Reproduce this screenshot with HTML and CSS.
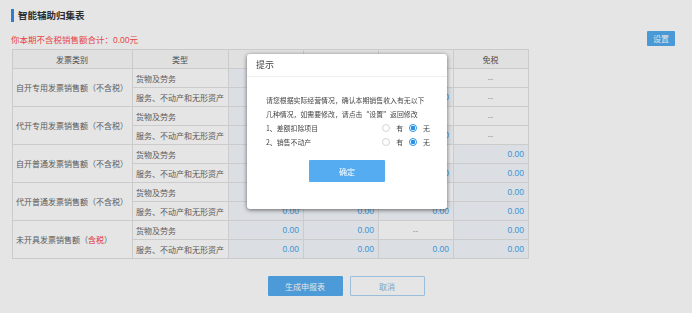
FILE: index.html
```html
<!DOCTYPE html>
<html lang="zh-CN">
<head>
    <meta charset="UTF-8">
    <title>智能辅助归集表</title>
    <link rel="stylesheet" href="styles.css">
</head>
<body>
    <div class="page">
        <h1 class="titulo">智能辅助归集表</h1>

        <div class="resumen">
            <span class="total">你本期不含税销售额合计：0.00元</span>
            <button class="boton-set">设置</button>
        </div>

        <table class="tabla">
            <thead>
                <tr>
                    <th class="c-cat">发票类别</th>
                    <th class="c-tipo">类型</th>
                    <th class="c-num">13%税率</th>
                    <th class="c-num">9%税率</th>
                    <th class="c-num">6%税率</th>
                    <th class="c-num">免税</th>
                </tr>
            </thead>
            <tbody>
                <tr>
                    <td class="cat" rowspan="2">自开专用发票销售额（不含税）</td>
                    <td class="tipo">货物及劳务</td>
                    <td class="val">0.00</td><td class="val">0.00</td><td class="nada">--</td><td class="nada">--</td>
                </tr>
                <tr>
                    <td class="tipo">服务、不动产和无形资产</td>
                    <td class="val">0.00</td><td class="val">0.00</td><td class="val">0.00</td><td class="nada">--</td>
                </tr>
                <tr>
                    <td class="cat" rowspan="2">代开专用发票销售额（不含税）</td>
                    <td class="tipo">货物及劳务</td>
                    <td class="val">0.00</td><td class="val">0.00</td><td class="nada">--</td><td class="nada">--</td>
                </tr>
                <tr>
                    <td class="tipo">服务、不动产和无形资产</td>
                    <td class="val">0.00</td><td class="val">0.00</td><td class="val">0.00</td><td class="nada">--</td>
                </tr>
                <tr>
                    <td class="cat" rowspan="2">自开普通发票销售额（不含税）</td>
                    <td class="tipo">货物及劳务</td>
                    <td class="val">0.00</td><td class="val">0.00</td><td class="nada">--</td><td class="val">0.00</td>
                </tr>
                <tr>
                    <td class="tipo">服务、不动产和无形资产</td>
                    <td class="val">0.00</td><td class="val">0.00</td><td class="val">0.00</td><td class="val">0.00</td>
                </tr>
                <tr>
                    <td class="cat" rowspan="2">代开普通发票销售额（不含税）</td>
                    <td class="tipo">货物及劳务</td>
                    <td class="val">0.00</td><td class="val">0.00</td><td class="nada">--</td><td class="val">0.00</td>
                </tr>
                <tr>
                    <td class="tipo">服务、不动产和无形资产</td>
                    <td class="val">0.00</td><td class="val">0.00</td><td class="val">0.00</td><td class="val">0.00</td>
                </tr>
                <tr>
                    <td class="cat" rowspan="2">未开具发票销售额（<span class="rojo">含税</span>）</td>
                    <td class="tipo">货物及劳务</td>
                    <td class="val">0.00</td><td class="val">0.00</td><td class="nada">--</td><td class="val">0.00</td>
                </tr>
                <tr>
                    <td class="tipo">服务、不动产和无形资产</td>
                    <td class="val">0.00</td><td class="val">0.00</td><td class="val">0.00</td><td class="val">0.00</td>
                </tr>
            </tbody>
        </table>

        <div class="acciones">
            <button class="boton boton-azul">生成申报表</button>
            <button class="boton boton-blanco">取消</button>
        </div>
    </div>

    <div class="mascara"></div>

    <div class="dialogo">
        <div class="dialogo-titulo">提示</div>
        <div class="dialogo-cuerpo">
            <p class="aviso">请您根据实际经营情况，确认本期销售收入有无以下几种情况，如需要修改，请点击“设置”返回修改</p>
            <div class="opcion">
                <span class="opcion-texto">1、差额扣除项目</span>
                <span class="radio"></span><span class="radio-label">有</span>
                <span class="radio activo"></span><span class="radio-label">无</span>
            </div>
            <div class="opcion">
                <span class="opcion-texto">2、销售不动产</span>
                <span class="radio"></span><span class="radio-label">有</span>
                <span class="radio activo"></span><span class="radio-label">无</span>
            </div>
            <button class="boton-ok">确定</button>
        </div>
    </div>
</body>
</html>
```

FILE: styles.css
```css
body {
    margin: 0;
    background: #fff;
    font-family: 'Liberation Sans', 'Noto Sans CJK SC', sans-serif;
    color: #555;
}

.page {
    padding: 9px 17px 0 12px;
}

.titulo {
    margin: 0 0 9px -1px;
    padding-left: 4px;
    border-left: 3px solid #2f8de8;
    font-size: 9.5px;
    line-height: 13px;
    font-weight: bold;
    color: #333;
}

.resumen {
    display: flex;
    justify-content: space-between;
    align-items: center;
    height: 15px;
    margin-bottom: 3px;
}

.total {
    color: #ff4d4f;
    font-size: 8.5px;
    margin-left: -1px;
}

.boton-set {
    width: 28px;
    height: 15px;
    padding: 0;
    border: none;
    border-radius: 1px;
    background: #52abf0;
    color: #fff;
    font-family: inherit;
    font-size: 8px;
}

.tabla {
    width: 516px;
    border-collapse: collapse;
    table-layout: fixed;
    font-size: 8px;
}

.tabla th,
.tabla td {
    box-sizing: border-box;
    height: 19px;
    padding: 0 4px 0 3px;
    border: 1px solid #e3e3e3;
    white-space: nowrap;
    overflow: hidden;
}

.tabla th {
    background: #fafafa;
    font-weight: normal;
    text-align: center;
    color: #555;
}

.c-cat { width: 120px; }
.c-tipo { width: 96px; }
.c-num { width: 75px; }

.cat,
.tipo {
    background: #fff;
    color: #666;
}

.rojo { color: #f33; }

.val {
    background: #f4f8fd;
    color: #46a8ee;
    text-align: right;
    font-size: 8.5px;
}

.nada {
    background: #fff;
    color: #999;
    text-align: center;
}

.acciones {
    display: flex;
    justify-content: center;
    gap: 7px;
    margin-top: 17px;
    padding-left: 5px;
}

.boton {
    width: 75px;
    height: 20px;
    padding: 0;
    border-radius: 1px;
    font-family: inherit;
    font-size: 8px;
}

.boton-azul {
    border: 1px solid #55acf0;
    background: #55acf0;
    color: #fff;
}

.boton-blanco {
    border: 1px solid #abd3f3;
    background: #fff;
    color: #8db6dc;
}

.mascara {
    position: fixed;
    inset: 0;
    background: rgba(0, 0, 0, 0.1);
}

.dialogo {
    position: absolute;
    left: 247px;
    top: 54px;
    width: 200px;
    height: 155px;
    background: #fff;
    border-radius: 3px;
    box-shadow: 0 1px 4px rgba(0, 0, 0, 0.55);
}

.dialogo-titulo {
    height: 22px;
    line-height: 23px;
    padding-left: 9px;
    border-bottom: 1px solid #eee;
    font-size: 9px;
    color: #444;
}

.dialogo-cuerpo {
    padding: 17px 16px 0 19px;
    font-family: 'Noto Sans CJK SC', sans-serif;
    font-size: 6.9px;
    color: #444;
}

.aviso {
    margin: 0;
    line-height: 13.5px;
}

.opcion {
    display: flex;
    align-items: center;
    height: 14px;
}

.opcion-texto {
    flex: 1;
}

.radio {
    width: 8px;
    height: 8px;
    border: 1px solid #d5d5d5;
    border-radius: 50%;
    box-sizing: border-box;
    margin-right: 6px;
}

.radio.activo {
    border-color: #2591e9;
    background: radial-gradient(circle, #2591e9 0 2px, #fff 2.5px);
}

.radio-label {
    margin-right: 6px;
}

.opcion .radio-label:last-child {
    margin-right: 1px;
}

.boton-ok {
    display: block;
    width: 76px;
    height: 22px;
    margin: 11px 0 0 43px;
    padding: 0;
    border: none;
    border-radius: 1px;
    background: #55acf0;
    color: #fff;
    font-family: inherit;
    font-size: 8px;
}
```
